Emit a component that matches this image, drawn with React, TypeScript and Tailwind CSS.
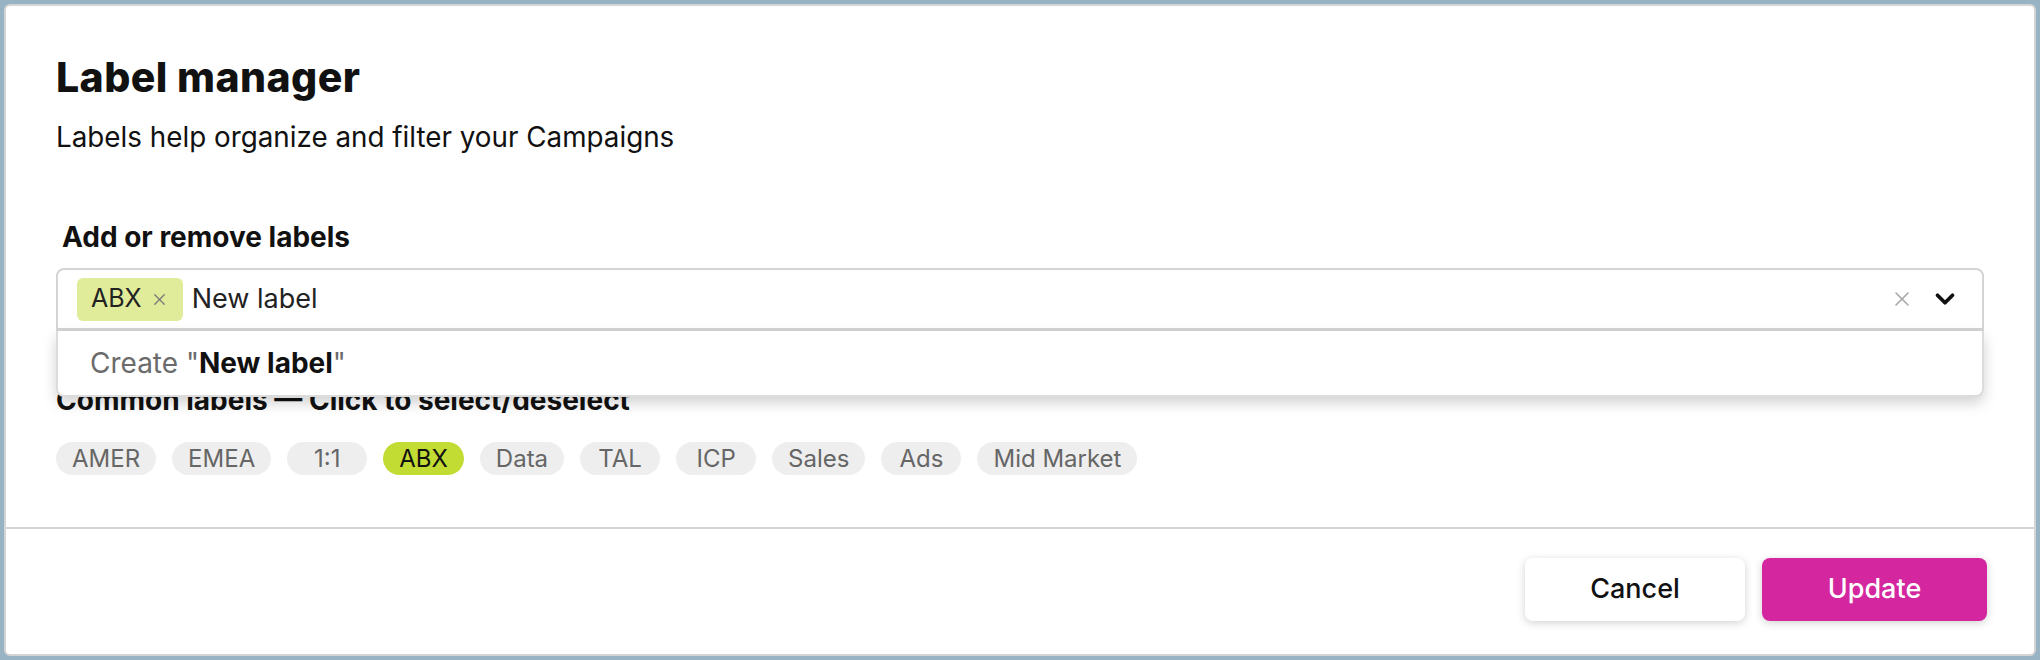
import { X, ChevronDown } from 'lucide-react';

const common = ['AMER', 'EMEA', '1:1', 'ABX', 'Data', 'TAL', 'ICP', 'Sales', 'Ads', 'Mid Market'];
const selected = ['ABX'];

export default function App() {
  return (
    <div className="h-[660px] w-[2040px] bg-[#97b3c4] p-[4px] font-['Inter',sans-serif]">
      <div className="flex h-full flex-col rounded-[6px] border-2 border-[#d4d4d4] bg-white">
        <div className="px-[50px] pt-[47px]">
          <h1 className="text-[41px] leading-[48px] font-extrabold tracking-[0.01em] text-[#111]">Label manager</h1>
          <p className="mt-[19px] text-[27.8px] leading-[34px] text-[#111]">Labels help organize and filter your Campaigns</p>

          <div className="mt-[66px] pl-[6px] text-[28px] leading-[34px] font-bold text-[#111]">Add or remove labels</div>

          <div className="relative mt-[14px]">
            <div className="flex h-[63px] items-center rounded-t-[8px] border-2 border-b-[3px] border-[#d4d4d4] pl-[19px] pr-[22px]">
              <span className="flex h-[43px] items-center gap-[8px] rounded-[6px] bg-[#e1ec9b] px-[14px] text-[25px] text-[#222]">
                ABX
                <X className="h-[19px] w-[19px] text-[#777]" strokeWidth={1.6} />
              </span>
              <span className="ml-[9px] text-[27px] text-[#222]">New label</span>
              <span className="ml-auto flex items-center gap-[16px]">
                <X className="h-[24px] w-[24px] text-[#a8a8a8]" strokeWidth={1.6} />
                <ChevronDown className="h-[30px] w-[30px] text-[#111]" strokeWidth={3} />
              </span>
            </div>
            <div className="absolute left-0 right-0 top-full z-10 flex h-[66px] items-center rounded-b-[8px] border-x-2 border-b-2 border-[#dcdcdc] bg-white pl-[32px] text-[28px] shadow-[0_6px_14px_rgba(0,0,0,0.18)]">
              <span className="text-[#6b6b6b]">Create "</span>
              <span className="font-bold text-[#111]">New label</span>
              <span className="text-[#6b6b6b]">"</span>
            </div>
          </div>

          <div className="mt-[52px] text-[28px] leading-[34px] font-bold text-[#111]">Common labels — Click to select/deselect</div>

          <div className="mt-[25px] flex gap-[16px]">
            {common.map((l) => (
              <span
                key={l}
                className={
                  selected.includes(l)
                    ? 'flex h-[33px] min-w-[80px] items-center justify-center rounded-full bg-[#c3dc33] px-[16px] text-[24px] text-[#111]'
                    : 'flex h-[33px] min-w-[80px] items-center justify-center rounded-full bg-[#eeeeee] px-[16px] text-[24px] text-[#666]'
                }
              >
                {l}
              </span>
            ))}
          </div>
        </div>

        <div className="mt-auto border-t-2 border-[#d4d4d4]">
          <div className="flex justify-end gap-[17px] px-[47px] pt-[29px] pb-[33px]">
            <button className="h-[63px] w-[220px] rounded-[8px] bg-white text-[27px] font-medium text-[#111] shadow-[0_2px_8px_rgba(0,0,0,0.18)]">
              Cancel
            </button>
            <button className="h-[63px] w-[225px] rounded-[8px] bg-[#d4279f] text-[27px] font-medium text-white shadow-[0_2px_8px_rgba(0,0,0,0.18)]">
              Update
            </button>
          </div>
        </div>
      </div>
    </div>
  );
}
